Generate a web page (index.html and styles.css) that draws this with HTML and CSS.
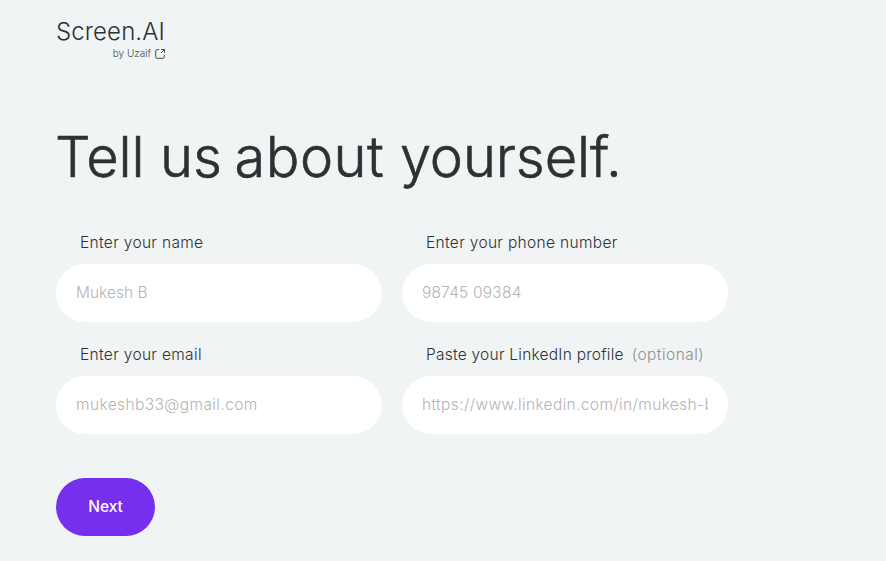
FILE: index.html
```html
<!DOCTYPE html>
<html lang="en">
<head>
<meta charset="utf-8">
<title>Screen.AI</title>
<link rel="stylesheet" href="styles.css">
</head>
<body>
<main class="page">
  <header class="brand">
    <div class="brand-name">Screen.AI</div>
    <a class="byline"><span class="byline-text">by Uzaif</span>
      <svg class="ext" viewBox="0 0 12 12" fill="none" stroke="currentColor"><path d="M5.2 1.7H3.2A1.5 1.5 0 0 0 1.7 3.2V8.8A1.5 1.5 0 0 0 3.2 10.3H8.8A1.5 1.5 0 0 0 10.3 8.8V7.2M7.2 1.5H10.5V4.8M10.3 1.7L7 5"/></svg>
    </a>
  </header>
  <h1 class="title">Tell us <span class="title-about">about</span> yourself.</h1>
  <form class="form">
    <div class="fields">
      <label class="field"><span class="label"><span class="l-name">Enter your name</span></span><span class="input"><span class="p-name">Mukesh B</span></span></label>
      <label class="field"><span class="label"><span class="l-phone">Enter your phone number</span></span><span class="input"><span class="p-phone">98745 09384</span></span></label>
      <label class="field"><span class="label"><span class="l-email">Enter your email</span></span><span class="input"><span class="p-email">mukeshb33@gmail.com</span></span></label>
      <label class="field"><span class="label"><span class="l-link">Paste your LinkedIn profile</span><span class="optional">(optional)</span></span><span class="input"><span class="p-link">https://www.linkedin.com/in/mukesh-b</span></span></label>
    </div>
    <button class="next" type="button">Next</button>
  </form>
</main>
</body>
</html>
```
FILE: styles.css
```css
* { box-sizing: border-box; }
body { margin: 0; background: #f0f4f5; color: #2e3132; font-family: Inter, "Liberation Sans", sans-serif; font-weight: 300; }
.page { width: 728px; height: 561px; padding: 17px 0 0 56px; overflow: hidden; }
.brand { width: 110px; }
.brand-name { font-size: 24px; line-height: 30px; letter-spacing: 0.1px; white-space: nowrap; }
.byline { display: flex; justify-content: flex-end; align-items: center; gap: 3px; height: 13px; font-size: 10px; line-height: 12px; white-space: nowrap; color: #444748; }
.byline-text { margin-top: -1px; }
.ext { width: 12px; height: 12px; }
.title { margin: 60px 0 0; height: 76px; font-size: 56px; line-height: 74px; font-weight: 300; letter-spacing: -0.1px; white-space: nowrap; text-indent: -1px; -webkit-text-stroke: 0.6px currentColor; }
.title-about { margin-left: -3px; letter-spacing: 0.5px; }
.form { margin-top: 34px; }
.fields { display: grid; grid-template-columns: 326px 326px; gap: 12px 20px; }
.field { display: block; height: 100px; }
.label { display: flex; align-items: center; gap: 8px; height: 24px; padding-left: 24px; margin-bottom: 10px; font-size: 15.5px; letter-spacing: 0.33px; white-space: nowrap; }
.l-link { letter-spacing: 0.24px; }
.optional { color: #8e9192; letter-spacing: 0.47px; }
.input { display: flex; align-items: center; height: 58px; border-radius: 29px; padding: 0 20px 2px; background: #fff; color: #b4b4b4; font-size: 15.5px; white-space: nowrap; }
.input > span { overflow: hidden; }
.p-phone { letter-spacing: 0.2px; }
.p-email { letter-spacing: 0.4px; }
.p-link { letter-spacing: 0.36px; }
.next { display: block; margin-top: 36px; width: 99px; height: 58px; border: 0; border-radius: 29px; padding: 0 0 1px; background: #772fee; color: #fff; font: 450 15.5px Inter, sans-serif; }
```
